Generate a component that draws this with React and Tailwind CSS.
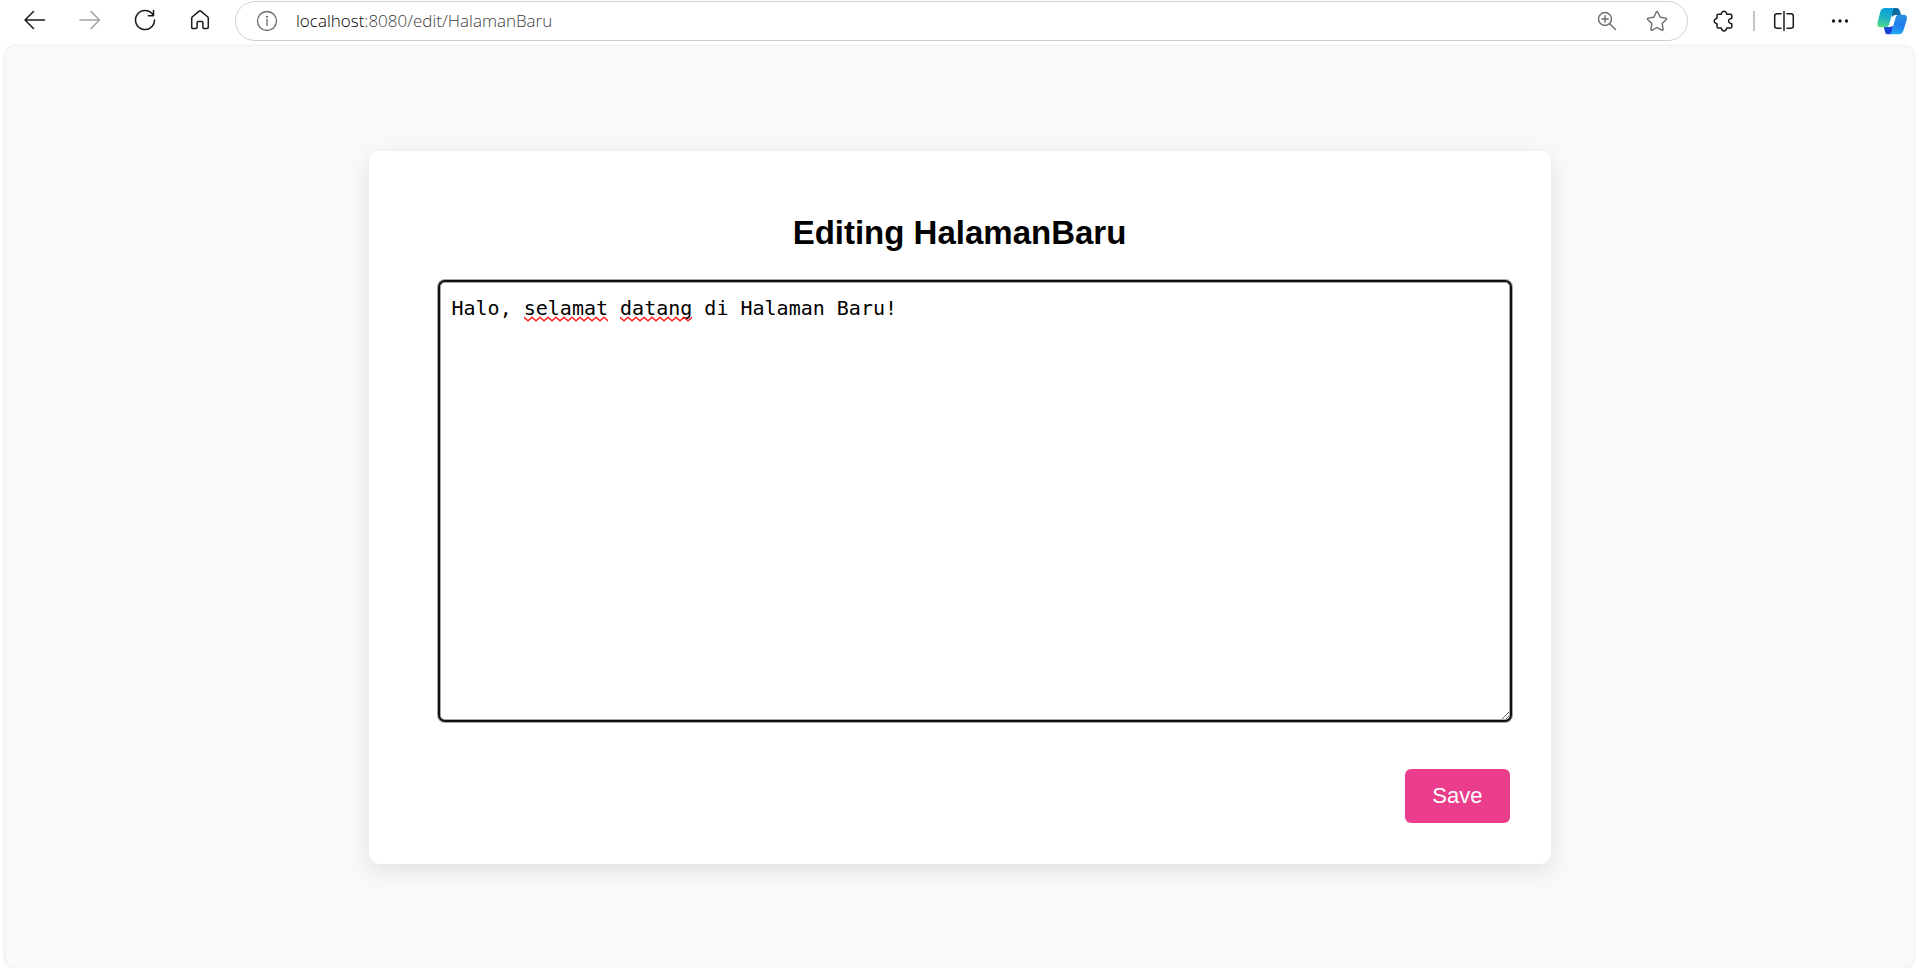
import { useState } from "react";

function Icon({ children, className = "" }) {
  return (
    <svg
      aria-hidden="true"
      viewBox="0 0 24 24"
      fill="none"
      stroke="currentColor"
      strokeWidth="1.5"
      strokeLinecap="round"
      strokeLinejoin="round"
      className={"size-6 shrink-0 " + className}
    >
      {children}
    </svg>
  );
}

function ToolButton({ label, disabled, children }) {
  return (
    <button
      type="button"
      aria-label={label}
      disabled={disabled}
      className="flex size-8 items-center justify-center text-[#1a1a1a] disabled:text-[#a3a3a3]"
    >
      {children}
    </button>
  );
}

function CopilotLogo() {
  return (
    <svg aria-hidden="true" viewBox="0 0 32 28" className="h-7 w-8">
      <defs>
        <linearGradient id="leftBand" x1="0.6" y1="0" x2="0.3" y2="1">
          <stop offset="0" stopColor="#0d9fdc" />
          <stop offset="0.5" stopColor="#1bb0c4" />
          <stop offset="1" stopColor="#55dd8c" />
        </linearGradient>
        <linearGradient id="rightBand" x1="0.6" y1="0" x2="0.4" y2="1">
          <stop offset="0" stopColor="#2b8fdc" />
          <stop offset="0.5" stopColor="#1f7df0" />
          <stop offset="1" stopColor="#20a8f4" />
        </linearGradient>
        <linearGradient id="topFold" x1="0" y1="0" x2="1" y2="0.6">
          <stop offset="0" stopColor="#0b5b90" />
          <stop offset="1" stopColor="#1377ae" />
        </linearGradient>
      </defs>
      <path d="M16 1h4.500c2 0 2.800.9 3.400 2.700L25.200 8H19.500c-2 0-2.900 1-3.500 2.500z" fill="url(#topFold)" />
      <path d="M9 20h5l3-1-.5 6c-.5 1.500-1.300 2.200-3 2.200h-2C10 27.200 9.300 26 8.900 24.500L7.800 20z" fill="#1745d8" />
      <path d="M9 1h11c-2 0-2.600 1.300-3.100 3L13.300 17c-.7 2.200-1.800 3.300-4 3.300H4.500C1.800 20.300.8 18.600 1.500 15.500L4.300 4.800C5 2.200 6.400 1 9 1z" fill="url(#leftBand)" />
      <path d="M23 7.700h4.500c2.800 0 4 1.800 3.200 5l-3.200 10.500c-.8 2.700-2.200 4-4.800 4H12.500c2 0 2.700-1.300 3.200-3L19.500 11c.6-2.200 1.500-3.300 3.500-3.300z" fill="url(#rightBand)" />
    </svg>
  );
}

function Toolbar() {
  return (
    <header className="flex h-[46px] shrink-0 items-start pr-[11px] pl-[19px]">
      <nav aria-label="Browser" className="flex gap-[23px] pt-1">
        <ToolButton label="Back">
          <Icon>
            <path d="M21.500 12H2M10.500 3.500 2 12l8.500 8.500" />
          </Icon>
        </ToolButton>
        <ToolButton label="Forward" disabled>
          <Icon>
            <path d="M2 12h19.500M13 3.500l8.500 8.500-8.500 8.500" />
          </Icon>
        </ToolButton>
        <ToolButton label="Refresh">
          <Icon>
            <path d="M20.200 7.200A9.500 9.500 0 1 0 21.500 12M20.500 2.500v5.200h-5.200" />
          </Icon>
        </ToolButton>
        <ToolButton label="Home">
          <Icon>
            <path d="M3.700 10.300c0-.7.300-1.200.8-1.600l6.600-5.600c.6-.5 1.200-.5 1.800 0l6.600 5.600c.5.400.8.900.8 1.600v9c0 .8-.5 1.200-1.200 1.200h-3c-.8 0-1.200-.4-1.200-1.200v-4.500c0-.8-.5-1.300-1.200-1.300h-3.400c-.7 0-1.200.5-1.200 1.300v4.500c0 .8-.4 1.200-1.200 1.200h-3c-.7 0-1.200-.4-1.200-1.200z" />
          </Icon>
        </ToolButton>
      </nav>

      <div className="mt-px ml-[19px] flex h-10 min-w-0 flex-1 items-center rounded-full border border-[#cfcfcf] bg-white pr-[14px] pl-[19px] text-[#6b6b6b]">
        <Icon className="[stroke-width:1.300]">
          <circle cx="12" cy="12" r="9.500" />
          <path d="M12 10.500v6" />
          <circle cx="12" cy="7.800" r=".5" fill="currentColor" />
        </Icon>
        <a
          href="#address"
          className="ml-[17px] min-w-0 flex-1 truncate font-['Open_Sans','Noto_Sans',sans-serif] text-[17px] leading-6 font-light text-[#3d3d3d]"
        >
          <span className="text-black">localhost</span>:8080/edit/HalamanBaru
        </a>
        <div className="flex gap-[18px]">
          <button type="button" aria-label="Zoom" className="flex size-8 items-center justify-center">
            <Icon className="[stroke-width:1.400]">
              <circle cx="10" cy="10" r="6.500" />
              <path d="M14.900 14.900 20.500 20.500M10 6.800v6.400M6.800 10h6.400" />
            </Icon>
          </button>
          <button type="button" aria-label="Add to favorites" className="flex size-8 items-center justify-center">
            <Icon className="[stroke-width:1.400]">
              <path d="M11.300 3c.3-.6 1.100-.6 1.400 0l2.500 5.300 5.700.8c.7.100.9.900.4 1.400l-4.200 4.100 1 5.800c.1.700-.6 1.100-1.200.8L12 18.500l-4.900 2.700c-.6.300-1.300-.1-1.200-.8l1-5.800-4.200-4.100c-.5-.5-.3-1.300.4-1.400l5.700-.8z" />
            </Icon>
          </button>
        </div>
      </div>

      <div className="ml-5 flex items-center pt-[5px]">
        <ToolButton label="Extensions">
          <Icon>
            <path d="M6.300 5.200H9.200C9.600 4.800 9.500 4.400 9.700 3.800 10.500 1.700 13.500 1.700 14.300 3.800 14.500 4.400 14.400 4.800 14.800 5.200H18.500C19.300 5.200 19.800 5.700 19.800 6.500V9.200C19.400 9.600 18.900 9.500 18.300 9.700 15.900 10.500 15.900 13.500 18.300 14.300 18.900 14.500 19.400 14.400 19.800 14.800V17.800C19.800 18.600 19.300 19.100 18.500 19.100H14.800C14.400 19.500 14.500 19.800 14.300 20.400 13.500 22.400 10.500 22.400 9.700 20.400 9.500 19.800 9.600 19.500 9.200 19.100H6.300C5.500 19.100 5 18.600 5 17.800V14.800C4.600 14.400 4.300 14.500 3.800 14.300 1.700 13.500 1.700 10.500 3.800 9.700 4.300 9.500 4.600 9.600 5 9.200V6.500C5 5.700 5.500 5.200 6.300 5.200Z" />
          </Icon>
        </ToolButton>
        <div className="mx-[13px] h-5 w-[2px] bg-[#c4c4c4]" />
        <ToolButton label="Split screen">
          <Icon>
            <path d="M12 2.500v19M9 4.700H5c-1.500 0-2.300.8-2.300 2.300v10c0 1.500.8 2.300 2.300 2.300h4M15 4.700h4c1.500 0 2.300.8 2.300 2.300v10c0 1.500-.8 2.300-2.300 2.300h-4" />
          </Icon>
        </ToolButton>
        <div className="w-6" />
        <ToolButton label="Settings and more">
          <Icon>
            <g fill="currentColor" stroke="none">
              <circle cx="5.500" cy="12" r="1.700" />
              <circle cx="12" cy="12" r="1.700" />
              <circle cx="18.500" cy="12" r="1.700" />
            </g>
          </Icon>
        </ToolButton>
        <div className="w-5" />
        <button type="button" aria-label="Copilot" className="flex h-8 items-center">
          <CopilotLogo />
        </button>
      </div>
    </header>
  );
}

function Squiggle({ id, className }) {
  return (
    <svg aria-hidden="true" className={"h-[6px] " + className}>
      <defs>
        <pattern id={id} width="8" height="6" patternUnits="userSpaceOnUse">
          <path d="M-1 0.500 0 1.200 4 4.800 8 1.200 9 0.500" fill="none" stroke="#ff1a1a" strokeWidth="1.400" />
        </pattern>
      </defs>
      <rect width="100%" height="6" fill={`url(#${id})`} />
    </svg>
  );
}

export default function App() {
  const [body, setBody] = useState("Halo, selamat datang di Halaman Baru!");

  return (
    <div className="flex min-h-screen flex-col bg-white">
      <Toolbar />
      <main className="mx-[5px] flex flex-1 items-center justify-center rounded-[10px] bg-[#f8f9fb] pt-px font-['Liberation_Sans',Arial,sans-serif] text-black shadow-[0_0_3px_rgba(0,0,0,0.16)]">
        <form
          onSubmit={(e) => e.preventDefault()}
          className="w-full max-w-[1182px] rounded-[11px] bg-white pt-[61px] pr-[39px] pb-[41px] pl-[69px] shadow-[0_6px_22px_rgba(0,0,0,0.1)]"
        >
          <h1 className="mr-[30px] text-center text-[33px] leading-[42px] font-bold">Editing HalamanBaru</h1>
          <div className="relative mt-[26px]">
            <textarea
              aria-label="Page body"
              spellCheck={false}
              value={body}
              onChange={(e) => setBody(e.target.value)}
              className="block h-[442px] w-full rounded-[7px] border-2 border-[#101010] bg-white px-[12px] pt-[13px] font-['DejaVu_Sans_Mono',monospace] text-[20px] leading-[26px] shadow-[0_0_0_1px_#a8a8a8,inset_0_0_0_1px_#a8a8a8] outline-none"
            />
            <div className="pointer-events-none absolute top-[36px] left-[14px] flex gap-[1ch] pl-[6ch] font-['DejaVu_Sans_Mono',monospace] text-[20px]">
              <Squiggle id="squiggle-a" className="w-[7ch]" />
              <Squiggle id="squiggle-b" className="w-[6ch]" />
            </div>
          </div>
          <div className="mt-[47px] mr-[2px] flex justify-end">
            <button type="submit" className="h-[54px] rounded-[6px] bg-[#ea3e8c] px-[27px] text-[22px] leading-[26px] text-white">
              Save
            </button>
          </div>
        </form>
      </main>
    </div>
  );
}
